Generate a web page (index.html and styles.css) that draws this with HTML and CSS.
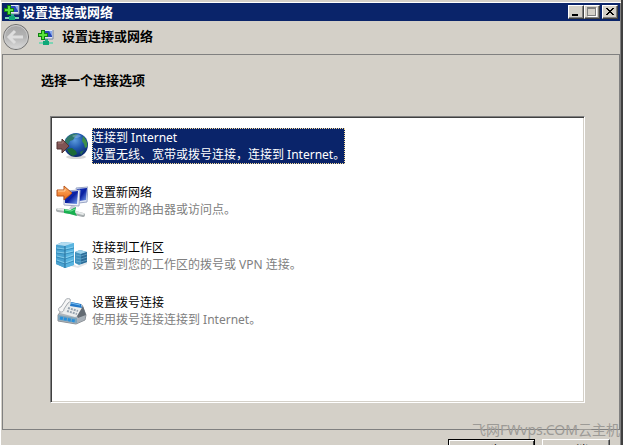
FILE: index.html
```html
<!DOCTYPE html>
<html lang="zh-CN">
<head>
    <meta charset="UTF-8">
    <title>设置连接或网络</title>
    <link rel="stylesheet" href="styles.css">
</head>
<body>
<svg class="defs">
    <defs>
        <linearGradient id="screen" x1="0" y1="0" x2="1" y2="1">
            <stop offset="0" stop-color="#1238c8"/>
            <stop offset=".5" stop-color="#0a20a0"/>
            <stop offset="1" stop-color="#7aa4f0"/>
        </linearGradient>
        <linearGradient id="orange" x1="0" y1="0" x2="0" y2="1">
            <stop offset="0" stop-color="#ffb468"/>
            <stop offset="1" stop-color="#ec6a16"/>
        </linearGradient>
        <linearGradient id="tower" x1="0" y1="0" x2="1" y2="0">
            <stop offset="0" stop-color="#3a92c4"/>
            <stop offset="1" stop-color="#78c4e8"/>
        </linearGradient>
        <radialGradient id="globe" cx=".45" cy=".3" r=".7">
            <stop offset="0" stop-color="#5c9ce0"/>
            <stop offset=".5" stop-color="#2058ac"/>
            <stop offset="1" stop-color="#0c2a6c"/>
        </radialGradient>
        <linearGradient id="disc" x1="0" y1="0" x2="0" y2="1">
            <stop offset="0" stop-color="#a4a4a4"/>
            <stop offset=".5" stop-color="#b4b4b4"/>
            <stop offset="1" stop-color="#dcdcdc"/>
        </linearGradient>
        <symbol id="net" viewBox="0 0 16 16">
            <path d="M5 1h10v9H5z" fill="#dfe6f4"/>
            <path d="M6 2h8v6H6z" fill="#2848b8"/>
            <path d="M11 2h3v5z" fill="#86a8ee"/>
            <path d="M15 1v9H6" fill="none" stroke="#7a86a0"/>
            <path d="M7 10h3v3H7z" fill="#2aa888"/>
            <path d="M1 13h14v2H1z" fill="#7cd4b4"/>
            <path d="M5 12h6v4H5z" fill="#10a878"/>
            <path d="M3 1h4v3h3v4H7v3H3V8H0V4h3z" fill="#128012"/>
            <path d="M4 2h2v3h3v2H6v3H4V7H1V5h3z" fill="#58e43c"/>
        </symbol>
    </defs>
</svg>
<div class="window">
    <div class="titlebar">
        <svg class="icon16"><use href="#net"/></svg>
        <span class="caption">设置连接或网络</span>
        <button class="sysbtn" aria-label="最小化"><svg viewBox="0 0 12 10"><path d="M2 7h6v2H2z"/></svg></button>
        <button class="sysbtn" aria-label="最大化" disabled><svg viewBox="0 0 12 10"><path d="M2 1h9v9H2z" fill="#fff"/><path d="M1 0h9v9H1zM2 2v6h7V2z" fill="#808080" fill-rule="evenodd"/><path d="M2 2h7v6H2z" fill="#d4d0c8"/></svg></button>
        <button class="sysbtn close" aria-label="关闭"><svg viewBox="0 0 12 10"><path d="M2 1h2v1h1v1h2V2h1V1h2v1H9v1H8v1H7v1h1v1h1v1h1v1H8V7H7V6H5v1H4v1H2V7h1V6h1V5h1V4H4V3H3V2H2z"/></svg></button>
    </div>
    <div class="header">
        <button class="back" aria-label="后退" disabled>
            <svg viewBox="0 0 28 28">
                <circle cx="14" cy="14" r="12.5" fill="url(#disc)" stroke="#6e6e6e"/>
                <circle cx="14" cy="14" r="11.5" fill="none" stroke="#cccccc"/>
                <path d="M13 8l-6 6 6 6M8 14h13" fill="none" stroke="#dedede" stroke-width="3"/>
            </svg>
        </button>
        <svg class="icon16"><use href="#net"/></svg>
        <span class="caption">设置连接或网络</span>
    </div>
    <div class="content">
        <h1>选择一个连接选项</h1>
        <div class="list">
            <button class="item selected">
                <svg class="icon32" viewBox="0 0 32 32">
                    <ellipse cx="20" cy="27" rx="10" ry="2" fill="#d8d8d8"/>
                    <circle cx="20" cy="15" r="12" fill="url(#globe)"/>
                    <path d="M10 9c3-5 8-6 12-5l-3 3-2 3-3 1-2 4-3 1c-1-2 0-5 1-7z" fill="#2f7868"/>
                    <path d="M27 6c3 3 5 7 4 11l-2 1-1-4-2-3z" fill="#3c9048"/>
                    <path d="M11 19l5-1 4 3 1 3-4 2c-3-1-5-4-6-7z" fill="#1c6a38"/>
                    <path d="M24 22l4-2-3 5z" fill="#286e50"/>
                    <path d="M16 6c3-2 7-2 9 0-2 2-6 3-9 0z" fill="#a8ccf0" opacity=".4"/>
                    <path d="M1 12h5V9l7 7-7 7v-4H1z" fill="#805454" stroke="#543434"/>
                    <path d="M2 13h5v-2" fill="none" stroke="#a87c78"/>
                </svg>
                <span class="text">
                    <span class="name">连接到 Internet</span>
                    <span class="desc">设置无线、宽带或拨号连接，连接到 Internet。</span>
                </span>
            </button>
            <button class="item">
                <svg class="icon32" viewBox="0 0 32 32">
                    <path d="M20 3l12-1-1 15-8 1z" fill="#e0e6f4" stroke="#98a4c4"/>
                    <path d="M21 4l10-1-1 12-7 1z" fill="url(#screen)"/>
                    <path d="M8 6l16-1-1 16-15-1z" fill="#f0f2fa" stroke="#a0a8c4"/>
                    <path d="M9 7l13-1-1 13-12-1z" fill="url(#screen)"/>
                    <path d="M15 21h4l1 3h-7z" fill="#c8ccd8"/>
                    <path d="M2 25l7 1 10 2 8 2" fill="none" stroke="#a8aeb0" stroke-width="4" stroke-linecap="round"/>
                    <path d="M2 24l7 1 10 2 8 2" fill="none" stroke="#e6eaea" stroke-width="2" stroke-linecap="round"/>
                    <path d="M8 24l6 1 6-3-1 5 2 4-7-2-6-1z" fill="#18b050"/>
                    <path d="M9 25l6 1 4-2" fill="none" stroke="#78e49c"/>
                    <path d="M1 5h7V1l8 7-8 7v-4H1z" fill="url(#orange)" stroke="#b8541c"/>
                    <path d="M2 6h7V4" fill="none" stroke="#ffd09c"/>
                </svg>
                <span class="text">
                    <span class="name">设置新网络</span>
                    <span class="desc">配置新的路由器或访问点。</span>
                </span>
            </button>
            <button class="item">
                <svg class="icon32" viewBox="0 0 32 32">
                    <path d="M16 23l5 3 10-4v2l-9 4-8-2z" fill="#e0e4e8"/>
                    <path d="M19 12l5-2 7 2v10l-8 3-4-2z" fill="#4090bc"/>
                    <path d="M19 12l5-2 7 2-6 2z" fill="#a0d4ec"/>
                    <path d="M25 14l6-2v10l-6 2z" fill="#2c6c98"/>
                    <path d="M20 15l5 1 6-2M20 18l5 1 6-2M20 21l5 1 6-2" fill="none" stroke="#78b8d8" opacity=".6"/>
                    <path d="M0 5l6-3 12 1v22l-9 3-9-4z" fill="url(#tower)"/>
                    <path d="M0 5l6-3 12 1-9 3z" fill="#b4dcf0"/>
                    <path d="M9 6l9-3v22l-9 3z" fill="#58b4e0"/>
                    <path d="M0 5l9 1v22l-9-4z" fill="#4aa2d0"/>
                    <path d="M0 9l9 1 9-2M0 13l9 1 9-2M0 17l9 2 9-3M0 21l9 3 9-3" fill="none" stroke="#2a80b0" opacity=".7"/>
                    <path d="M1 8l8 1 8-2M1 12l8 1 8-2M1 16l8 2 8-3M1 20l8 3 8-3" fill="none" stroke="#9cdcf4" opacity=".7"/>
                    <path d="M9 6v22" stroke="#246c98"/>
                </svg>
                <span class="text">
                    <span class="name">连接到工作区</span>
                    <span class="desc">设置到您的工作区的拨号或 VPN 连接。</span>
                </span>
            </button>
            <button class="item">
                <svg class="icon32" viewBox="0 0 32 32">
                    <path d="M2 20l10-13 14 3 4 10-1 5-9 4-18-3z" fill="#b0b6bc" stroke="#8c9298"/>
                    <path d="M4 18l9-11 13 3 1 9-8 3z" fill="#eceeee"/>
                    <path d="M15 7l10 2 1 4-12-2z" fill="#2478c8"/>
                    <path d="M15 8l9 2" stroke="#78c0f4"/>
                    <path d="M12 13l10 3M11 16l10 3" fill="none" stroke="#98a4b0" stroke-width="2" stroke-dasharray="2 1"/>
                    <path d="M27 11l3 9-8 3-1-2z" fill="#646c74"/>
                    <path d="M2 20l19 3v5L2 25z" fill="#7ca4bc"/>
                    <path d="M4 23l15 3" stroke="#2890dc" stroke-width="3" stroke-dasharray="3 1"/>
                    <path d="M21 24l8-3v3l-8 4z" fill="#a8b0b8"/>
                    <path d="M3 16c-1-2 0-4 2-4l4-6c0-2 3-3 5-2 1 2 0 3-2 4l-4 6c0 3-3 4-5 2z" fill="#f6f6f6" stroke="#a4aab0"/>
                </svg>
                <span class="text">
                    <span class="name">设置拨号连接</span>
                    <span class="desc">使用拨号连接连接到 Internet。</span>
                </span>
            </button>
        </div>
    </div>
    <div class="footer">
        <button class="btn default">下一步(N)</button>
        <button class="btn">取消</button>
    </div>
    <span class="watermark">飞网FWvps.COM云主机</span>
</div>
</body>
</html>
```

FILE: styles.css
```css
*{
    margin: 0;
    padding: 0;
    box-sizing: border-box;
}
body{
    background: #d4d0c8;
    font: 12px/17px "Noto Sans", "Noto Sans CJK SC", sans-serif;
    color: #000;
}
button{
    font: inherit;
    color: inherit;
    border: none;
    background: none;
}
.defs{
    position: absolute;
    width: 0;
    height: 0;
}
.window{
    position: relative;
    display: flex;
    flex-direction: column;
    height: 100vh;
    padding: 1px 1px 0;
    overflow: hidden;
    border-left: 1px solid #fff;
    border-right: 2px solid #404040;
    box-shadow: inset 0 2px 0 #d4d0c8, inset 0 3px 0 #fff, inset -1px 0 0 #808080;
}
.titlebar{
    display: flex;
    align-items: center;
    height: 18px;
    margin-top: 2px;
    padding: 0 2px;
    background: #0a246a;
    color: #fff;
}
.caption{
    flex: 1;
    font-size: 13px;
    font-weight: bold;
}
.icon16{
    width: 16px;
    height: 16px;
}
.titlebar .caption{
    padding-left: 2px;
}
.sysbtn{
    width: 16px;
    height: 14px;
    padding: 1px;
    background: #d4d0c8;
    border: 1px solid;
    border-color: #fff #404040 #404040 #fff;
    box-shadow: inset -1px -1px 0 #808080;
}
.sysbtn svg{
    display: block;
    width: 12px;
    height: 10px;
}
.close{
    margin-left: 2px;
}
.header{
    display: flex;
    align-items: center;
    height: 33px;
    padding-bottom: 2px;
}
.back{
    width: 28px;
    height: 28px;
    margin-right: 8px;
}
.back svg{
    display: block;
}
.header .caption{
    padding-left: 8px;
}
.content{
    flex: 1;
    display: flex;
    flex-direction: column;
    padding: 17px 34px 26px 47px;
    border: 1px solid #808080;
}
h1{
    margin: 0 0 27px -9px;
    font-size: 13px;
    line-height: 17px;
}
.list{
    flex: 1;
    display: flex;
    flex-direction: column;
    align-items: flex-start;
    gap: 19px;
    padding: 11px 4px;
    background: #fff;
    border: 1px solid;
    border-color: #808080 #fff #fff #808080;
    box-shadow: inset 1px 1px 0 #404040, inset -1px -1px 0 #d4d0c8;
}
.item{
    display: flex;
    align-items: center;
    gap: 4px;
    padding-left: 1px;
    text-align: left;
}
.icon32{
    width: 32px;
    height: 32px;
}
.text{
    padding: 1px 0;
}
.name, .desc{
    display: block;
}
.desc{
    color: #808080;
}
.selected .text{
    background: #0a246a;
    color: #fff;
    outline: 1px dotted #f5db95;
    outline-offset: -1px;
}
.selected .desc{
    color: #fff;
}
.footer{
    flex: 0 0 15px;
    display: flex;
    justify-content: flex-end;
    align-items: flex-start;
    gap: 7px;
    min-height: 0;
    height: 15px;
    padding: 9px 10px 0 0;
}
.btn{
    flex: none;
    width: 68px;
    height: 23px;
    background: #d4d0c8;
    border: 1px solid;
    border-color: #fff #404040 #404040 #fff;
    box-shadow: inset -1px -1px 0 #808080;
}
.btn.default{
    width: 87px;
    border-color: #000;
    box-shadow: inset 1px 1px 0 #fff, inset -1px -1px 0 #404040;
}
.watermark{
    position: absolute;
    right: 1px;
    bottom: 7px;
    font-size: 14px;
    color: #9c9a96;
}
```
